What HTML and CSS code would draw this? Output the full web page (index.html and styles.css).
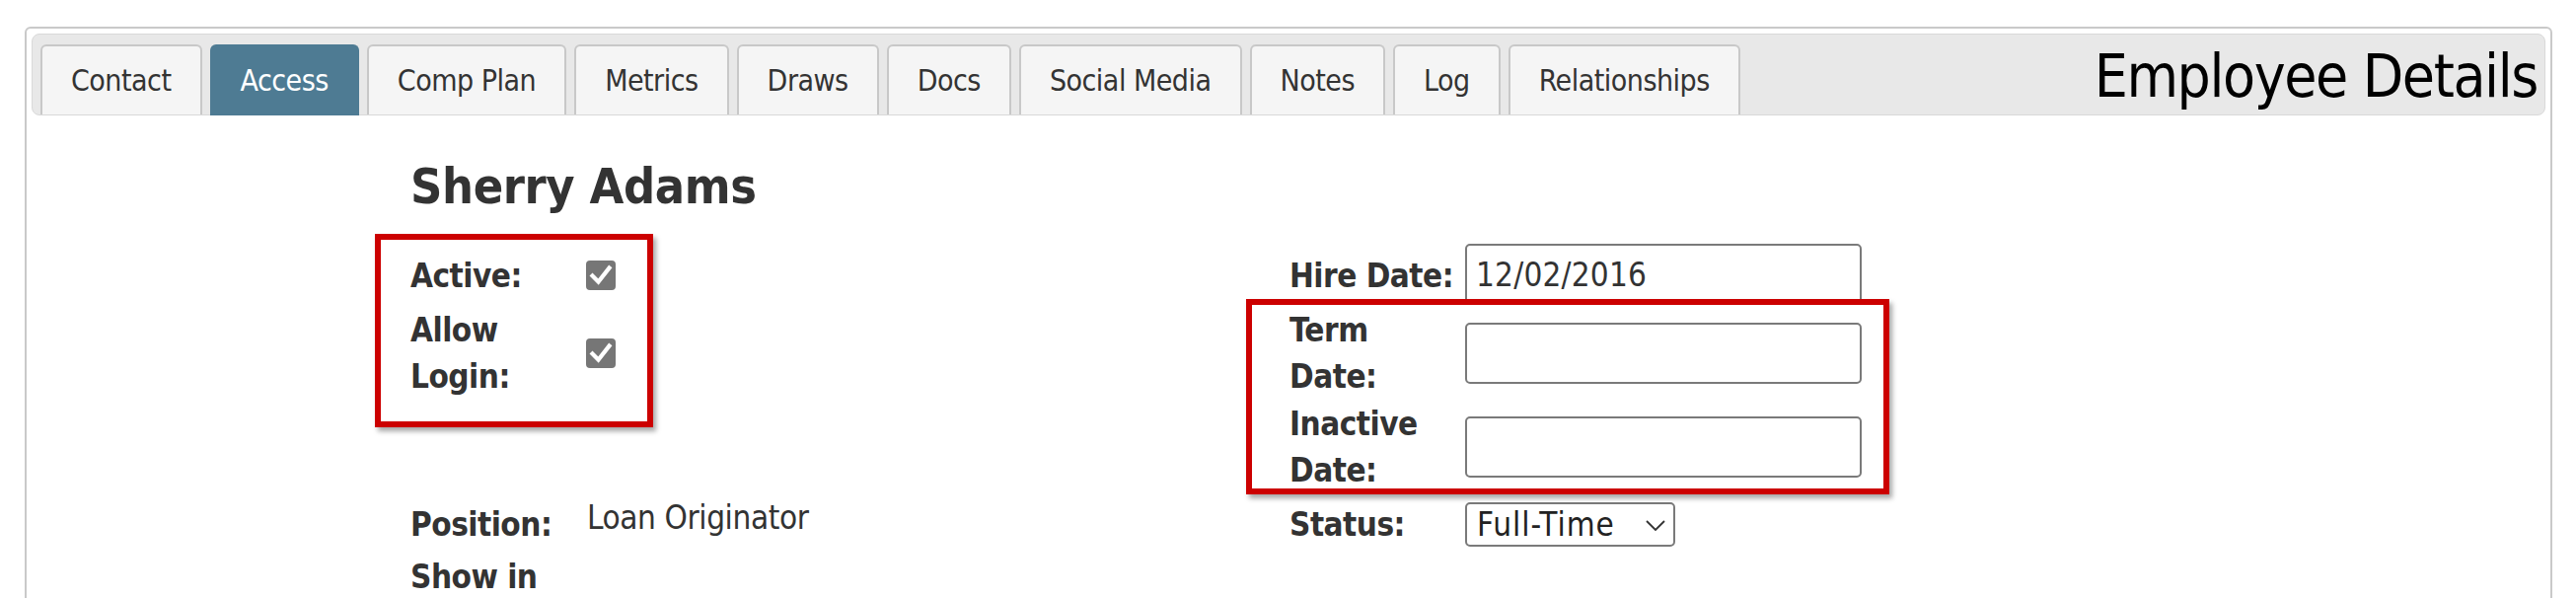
FILE: index.html
```html
<!DOCTYPE html>
<html lang="en">
<head>
<meta charset="utf-8">
<title>Employee Details</title>
<link rel="stylesheet" href="styles.css">
</head>
<body>
<div class="panel">
  <div class="tabbar">
    <ul class="tabs">
      <li class="tab">Contact</li>
      <li class="tab active">Access</li>
      <li class="tab">Comp Plan</li>
      <li class="tab">Metrics</li>
      <li class="tab">Draws</li>
      <li class="tab">Docs</li>
      <li class="tab">Social Media</li>
      <li class="tab">Notes</li>
      <li class="tab">Log</li>
      <li class="tab">Relationships</li>
    </ul>
    <h1 class="title">Employee Details</h1>
  </div>

  <div class="content">
    <h2 class="name">Sherry Adams</h2>
    <div class="form">
      <div class="label r1 c1">Active:</div>
      <div class="cell r1 c2"><span class="check"><svg viewBox="0 0 30 30" width="30" height="30"><path d="M6.5 15.5 L12.5 21.5 L23.5 7.5" fill="none" stroke="#fff" stroke-width="4.2" stroke-linecap="square" stroke-linejoin="miter"/></svg></span></div>
      <div class="label r1 c3 nowrap">Hire Date:</div>
      <div class="cell r1 c4 top"><input class="text-input" type="text" value="12/02/2016"></div>

      <div class="label r2 c1">Allow<br>Login:</div>
      <div class="cell r2 c2"><span class="check"><svg viewBox="0 0 30 30" width="30" height="30"><path d="M6.5 15.5 L12.5 21.5 L23.5 7.5" fill="none" stroke="#fff" stroke-width="4.2" stroke-linecap="square" stroke-linejoin="miter"/></svg></span></div>
      <div class="label r2 c3">Term<br>Date:</div>
      <div class="cell r2 c4"><input class="text-input" type="text" value=""></div>

      <div class="label r3 c3">Inactive<br>Date:</div>
      <div class="cell r3 c4"><input class="text-input" type="text" value=""></div>

      <div class="label r4 c1">Position:</div>
      <div class="value r4 c2 top">Loan Originator</div>
      <div class="label r4 c3">Status:</div>
      <div class="cell r4 c4">
        <span class="select-wrap">
          <select class="select"><option>Full-Time</option><option>Part-Time</option></select>
          <svg class="chevron" viewBox="0 0 20 11" width="20" height="11"><path d="M1 1 L10 10 L19 1" fill="none" stroke="#333" stroke-width="1.8"/></svg>
        </span>
      </div>

      <div class="label r5 c1 top">Show in</div>
    </div>
  </div>

  <div class="callout callout-access"></div>
  <div class="callout callout-dates"></div>
</div>
</body>
</html>
```

FILE: styles.css
```css
html, body {
  margin: 0;
  padding: 0;
  background: #ffffff;
}

body {
  font-family: "DejaVu Sans Condensed", "DejaVu Sans", sans-serif;
  color: #333333;
  overflow: hidden;
}

.panel {
  position: relative;
  margin: 27px 24px 0 25px;
  border: 2px solid #c9c9c9;
  border-radius: 6px;
  padding: 5px 5px 60px 5px;
}

.tabbar {
  display: flex;
  align-items: flex-start;
  justify-content: space-between;
  background: #e8e8e8;
  border: 1px solid #d9d9d9;
  border-radius: 8px;
  padding: 10px 7px 0 8px;
}

.tabs {
  display: flex;
  gap: 8px;
  list-style: none;
  margin: 0;
  padding: 0;
}

.tab {
  box-sizing: border-box;
  height: 71px;
  padding: 15px 29px 14px 29px;
  font-size: 30px;
  line-height: 40px;
  letter-spacing: -0.5px;
  color: #333333;
  background: #f5f5f5;
  border: 2px solid #c8c8c8;
  border-bottom: none;
  border-radius: 6px 6px 0 0;
  white-space: nowrap;
}

.tab.active {
  background: #4e7b93;
  border-color: #4e7b93;
  color: #ffffff;
  height: 72px;
  margin-bottom: -1px;
}

.title {
  margin: -3px 0 0 0;
  font-size: 60px;
  line-height: 70px;
  font-weight: normal;
  letter-spacing: -1.4px;
  color: #000000;
  white-space: nowrap;
}

.content {
  padding-left: 384px;
}

.name {
  margin: 42px 0 28px 0;
  font-size: 50px;
  line-height: 60px;
  font-weight: bold;
  color: #333333;
  letter-spacing: -0.4px;
}

.form {
  display: grid;
  grid-template-columns: 179px 712px 178px 1fr;
  grid-template-rows: 64px 94px 96px 60px auto;
}

.r1 { grid-row: 1; }
.r2 { grid-row: 2; }
.r3 { grid-row: 3; }
.r4 { grid-row: 4; }
.r5 { grid-row: 5; }
.c1 { grid-column: 1; }
.c2 { grid-column: 2; }
.c3 { grid-column: 3; }
.c4 { grid-column: 4; }

.label {
  align-self: center;
  font-size: 33px;
  line-height: 47px;
  font-weight: bold;
  color: #333333;
  letter-spacing: -0.5px;
}

.cell {
  align-self: center;
  display: flex;
  align-items: center;
}

.value {
  font-size: 33px;
  line-height: 47px;
  color: #333333;
  letter-spacing: -0.4px;
}

.top { align-self: start; }
.nowrap { white-space: nowrap; }

.check {
  display: inline-flex;
  width: 30px;
  height: 30px;
  border-radius: 4px;
  background: #767676;
  margin-left: -1px;
}

.text-input {
  box-sizing: border-box;
  width: 402px;
  height: 62px;
  margin: 0;
  padding: 0 9px;
  border: 2px solid #7a7a7a;
  border-radius: 5px;
  font-family: "DejaVu Sans Condensed", "DejaVu Sans", sans-serif;
  font-size: 33px;
  letter-spacing: 0.2px;
  color: #333333;
  background: #ffffff;
  outline: none;
}

.select-wrap {
  position: relative;
  display: inline-block;
  margin-top: 1px;
}

.select {
  box-sizing: border-box;
  width: 213px;
  height: 45px;
  margin: 0;
  padding: 0 0 0 10px;
  border: 2px solid #7a7a7a;
  border-radius: 5px;
  appearance: none;
  -webkit-appearance: none;
  background: #ffffff;
  font-family: "DejaVu Sans Condensed", "DejaVu Sans", sans-serif;
  font-size: 33px;
  letter-spacing: 1px;
  color: #222222;
  display: block;
}

.chevron {
  position: absolute;
  left: 183px;
  top: 18px;
  pointer-events: none;
}

.callout {
  position: absolute;
  box-sizing: border-box;
  border: 6px solid #cc0000;
  box-shadow: 3px 4px 5px rgba(0, 0, 0, 0.35);
  pointer-events: none;
}

.callout-access {
  left: 353px;
  top: 208px;
  width: 282px;
  height: 196px;
}

.callout-dates {
  left: 1236px;
  top: 274px;
  width: 652px;
  height: 198px;
}
```
